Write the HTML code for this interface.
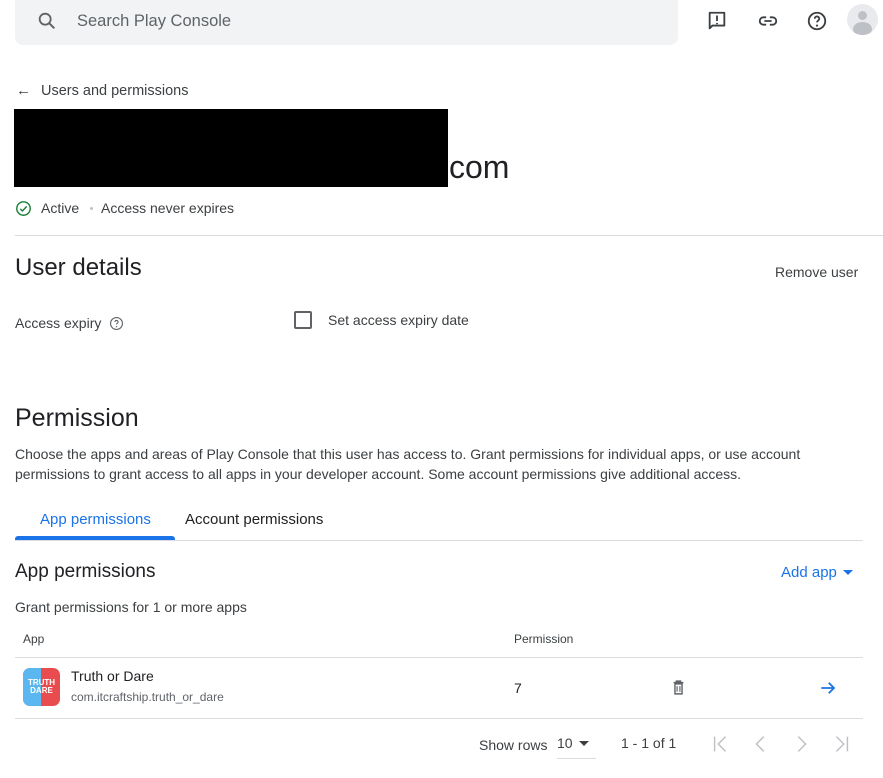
<!DOCTYPE html>
<html><head><meta charset="utf-8"><style>
*{margin:0;padding:0;box-sizing:border-box}
body{width:883px;height:778px;background:#fff;font-family:"Liberation Sans",Arial,sans-serif;color:#202124;position:relative;overflow:hidden}
.a{position:absolute;white-space:nowrap}
.t14{font-size:14px;color:#3c4043}
</style></head><body>
<div class="a" style="left:15px;top:-10px;width:663px;height:55px;background:#f1f3f4;border-radius:8px"></div>
<svg class="a" style="left:36px;top:10px" width="22" height="22" viewBox="0 0 24 24"><circle cx="10" cy="10" r="6" fill="none" stroke="#5f6368" stroke-width="2"/><path d="M14.5 14.5L20 20" stroke="#5f6368" stroke-width="2.2"/></svg>
<div class="a" style="left:77px;top:12px;font-size:16.5px;color:#5f6368">Search Play Console</div>
<svg class="a" style="left:706px;top:10px" width="22" height="22" viewBox="0 0 24 24"><path d="M4 3h16v14H7l-3 3z" fill="none" stroke="#3c4043" stroke-width="2" stroke-linejoin="round"/><path d="M12 6v6M12 14v1.5" stroke="#3c4043" stroke-width="2"/></svg>
<svg class="a" style="left:757px;top:10px" width="22" height="22" viewBox="0 0 24 24"><path d="M10 8H7a4 4 0 000 8h3M14 8h3a4 4 0 010 8h-3M8 12h8" fill="none" stroke="#3c4043" stroke-width="2"/></svg>
<svg class="a" style="left:806px;top:10px" width="22" height="22" viewBox="0 0 24 24"><circle cx="12" cy="12" r="9" fill="none" stroke="#3c4043" stroke-width="2"/><path d="M9.5 9.5a2.5 2.5 0 115 0c0 2-2.5 2-2.5 4" fill="none" stroke="#3c4043" stroke-width="2"/><circle cx="12" cy="17" r="1.2" fill="#3c4043"/></svg>
<div class="a" style="left:847px;top:4px;width:31px;height:31px;border-radius:50%;background:#e8eaed;overflow:hidden"><div class="a" style="left:11px;top:7px;width:9px;height:9px;border-radius:50%;background:#bdc1c6"></div><div class="a" style="left:6px;top:18px;width:19px;height:14px;border-radius:50%;background:#bdc1c6"></div></div>

<div class="a" style="left:16px;top:82px;font-size:15px;color:#3c4043">←</div>
<div class="a" style="left:41px;top:83px;font-size:14.5px;color:#3c4043">Users and permissions</div>
<div class="a" style="left:14px;top:109px;width:434px;height:78px;background:#000"></div>
<div class="a" style="left:449px;top:149px;font-size:32px;color:#202124">com</div>
<svg class="a" style="left:15px;top:200px" width="17" height="17" viewBox="0 0 24 24"><circle cx="12" cy="12" r="9.5" fill="none" stroke="#188038" stroke-width="2"/><path d="M7.5 12.5l3 3 6-6.5" fill="none" stroke="#188038" stroke-width="2"/></svg>
<div class="a t14" style="left:41px;top:200px">Active</div>
<div class="a" style="left:90px;top:207px;width:3px;height:3px;border-radius:50%;background:#bdc1c6"></div>
<div class="a t14" style="left:101px;top:200px">Access never expires</div>
<div class="a" style="left:15px;top:235px;width:868px;height:1px;background:#dadce0"></div>

<div class="a" style="left:15px;top:254px;font-size:24px">User details</div>
<div class="a t14" style="left:775px;top:264px">Remove user</div>
<div class="a t14" style="left:15px;top:315px">Access expiry</div>
<svg class="a" style="left:109px;top:316px" width="15" height="15" viewBox="0 0 24 24"><circle cx="12" cy="12" r="9.5" fill="none" stroke="#5f6368" stroke-width="1.8"/><path d="M9.5 9.5a2.5 2.5 0 115 0c0 2-2.5 2-2.5 4" fill="none" stroke="#5f6368" stroke-width="1.8"/><circle cx="12" cy="17" r="1.1" fill="#5f6368"/></svg>
<div class="a" style="left:294px;top:311px;width:18px;height:18px;border:2px solid #5f6368;border-radius:2px"></div>
<div class="a t14" style="left:328px;top:312px">Set access expiry date</div>

<div class="a" style="left:15px;top:404px;font-size:25px">Permission</div>
<div class="a t14" style="left:15px;top:444px;line-height:20px;white-space:normal;width:830px">Choose the apps and areas of Play Console that this user has access to. Grant permissions for individual apps, or use account permissions to grant access to all apps in your developer account. Some account permissions give additional access.</div>
<div class="a" style="left:40px;top:511px;font-size:15px;color:#1a73e8">App permissions</div>
<div class="a" style="left:185px;top:511px;font-size:15px;color:#202124">Account permissions</div>
<div class="a" style="left:15px;top:540px;width:848px;height:1px;background:#dadce0"></div>
<div class="a" style="left:15px;top:536px;width:160px;height:4px;background:#1a73e8;border-radius:3px 3px 0 0"></div>

<div class="a" style="left:15px;top:561px;font-size:19px">App permissions</div>
<div class="a" style="left:781px;top:564px;font-size:15px;color:#1a73e8">Add app</div>
<div class="a" style="left:843px;top:570px;border-left:5px solid transparent;border-right:5px solid transparent;border-top:5px solid #1a73e8"></div>
<div class="a t14" style="left:15px;top:599px">Grant permissions for 1 or more apps</div>

<div class="a" style="left:23px;top:632px;font-size:12px;color:#3c4043">App</div>
<div class="a" style="left:514px;top:632px;font-size:12px;color:#3c4043">Permission</div>
<div class="a" style="left:15px;top:657px;width:848px;height:1px;background:#dadce0"></div>
<div class="a" style="left:23px;top:668px;width:37px;height:38px;border-radius:7px;overflow:hidden;background:#e84c4f"><div class="a" style="left:0;top:0;width:18px;height:38px;background:#5ab7ef"></div><div class="a" style="left:3px;top:11px;font-size:8px;font-weight:bold;color:#fff;line-height:8px;text-align:center;width:31px">TRUTH<br>DARE</div></div>
<div class="a t14" style="left:71px;top:668px;color:#202124">Truth or Dare</div>
<div class="a" style="left:71px;top:690px;font-size:12px;color:#5f6368">com.itcraftship.truth_or_dare</div>
<div class="a t14" style="left:514px;top:680px;color:#202124">7</div>
<svg class="a" style="left:670px;top:679px" width="17" height="17" viewBox="0 0 24 24"><path d="M5 5h14M9 5V3h6v2M7 7h10v14H7z" fill="none" stroke="#5f6368" stroke-width="2"/><path d="M10 10v8M14 10v8" stroke="#5f6368" stroke-width="1.6"/></svg>
<svg class="a" style="left:819px;top:679px" width="18" height="18" viewBox="0 0 24 24"><path d="M3 12h17M13 5l7 7-7 7" fill="none" stroke="#1a73e8" stroke-width="2.4"/></svg>
<div class="a" style="left:15px;top:718px;width:848px;height:1px;background:#dadce0"></div>

<div class="a t14" style="left:479px;top:737px">Show rows</div>
<div class="a t14" style="left:557px;top:735px">10</div>
<div class="a" style="left:579px;top:741px;border-left:5px solid transparent;border-right:5px solid transparent;border-top:5px solid #3c4043"></div>
<div class="a" style="left:557px;top:758px;width:39px;height:1px;background:#dadce0"></div>
<div class="a t14" style="left:621px;top:735px">1 - 1 of 1</div>
<svg class="a" style="left:710px;top:733px" width="22" height="22" viewBox="0 0 24 24"><path d="M5 4v16M17 4l-8 8 8 8" fill="none" stroke="#bdc1c6" stroke-width="1.6"/></svg>
<svg class="a" style="left:750px;top:733px" width="22" height="22" viewBox="0 0 24 24"><path d="M15 4l-8 8 8 8" fill="none" stroke="#bdc1c6" stroke-width="1.6"/></svg>
<svg class="a" style="left:790px;top:733px" width="22" height="22" viewBox="0 0 24 24"><path d="M9 4l8 8-8 8" fill="none" stroke="#bdc1c6" stroke-width="1.6"/></svg>
<svg class="a" style="left:830px;top:733px" width="22" height="22" viewBox="0 0 24 24"><path d="M19 4v16M7 4l8 8-8 8" fill="none" stroke="#bdc1c6" stroke-width="1.6"/></svg>
</body></html>
